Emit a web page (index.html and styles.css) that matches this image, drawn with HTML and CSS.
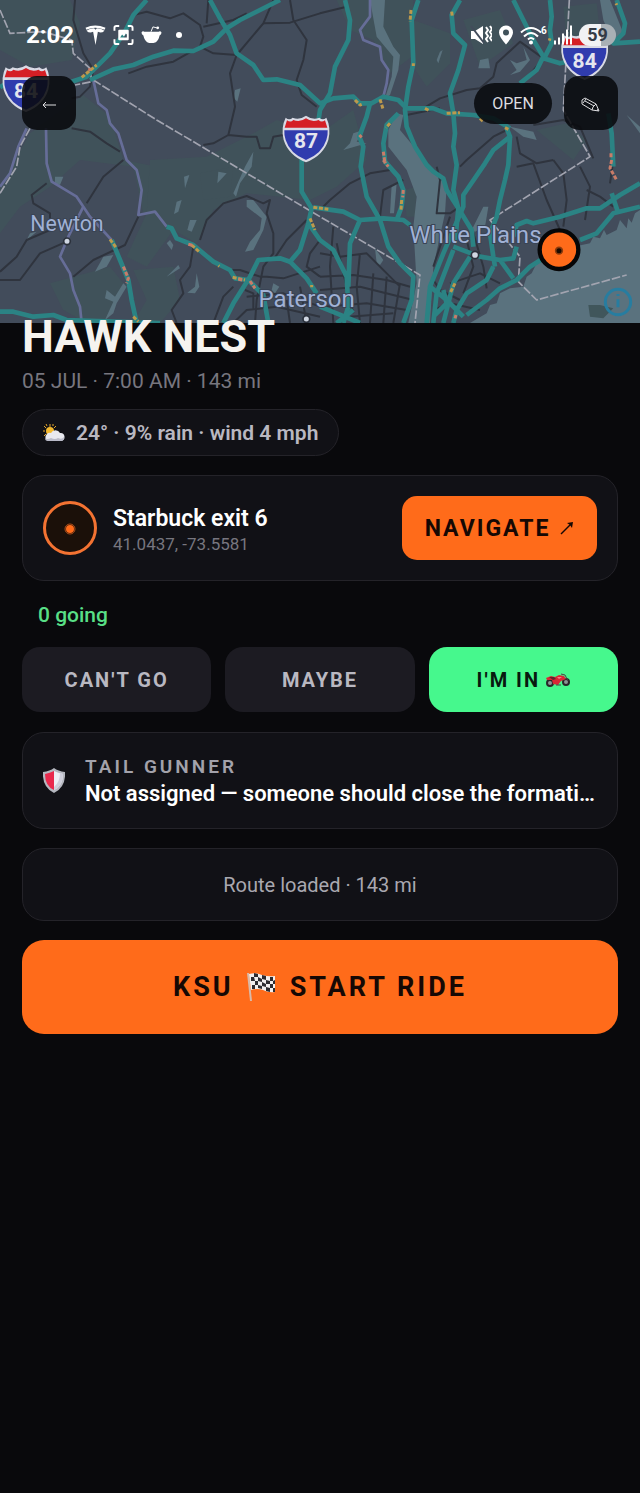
FILE: index.html
```
<!DOCTYPE html>
<html lang="en">
<head>
  <meta charset="UTF-8">
  <meta name="viewport" content="width=device-width, initial-scale=1">
  <title>Hawk Nest</title>
  <link rel="stylesheet" href="styles.css">
</head>
<body>
  <header class="hero">
    <svg class="map" viewBox="0 0 1920 969" preserveAspectRatio="xMidYMid slice">
      <defs>
        <g id="shield">
          <path d="M-61 -62 Q-50 -52 -40 -62 Q-20 -54 0 -68 Q20 -54 40 -62 Q50 -52 61 -62 Q76 -32 67 5 Q52 52 0 72 Q-52 52 -67 5 Q-76 -32 -61 -62Z" fill="#d8d9e4"/>
          <path d="M-57 -54 Q-46 -46 -38 -55 Q-18 -47 0 -60 Q18 -47 38 -55 Q46 -46 57 -54 L64 -32 L-64 -32Z" fill="#d51f25"/>
          <path d="M-65 -24 L65 -24 Q66 -8 61 5 Q48 46 0 65 Q-48 46 -61 5 Q-66 -8 -65 -24Z" fill="#303cae"/>
        </g>
      </defs>
      <rect width="1920" height="969" fill="#424c5b"/>

      <!-- parks -->
      <g class="park">
        <path d="M0 0H210L240 70L215 180L90 200L0 150Z"/>
        <path d="M250 285L330 350L370 480L470 500L530 640L480 680L430 640L400 500L240 480L150 560L60 620L0 700V560L90 400Z"/>
        <path d="M450 480L620 470L760 400L830 360L960 400L1060 330L1100 480L1010 560L930 600L740 580L640 630L590 730L520 690L440 800L380 770L440 640Z"/>
        <path d="M1010 0L1240 0L1235 170L1170 220L1120 120L1050 90Z"/>
        <path d="M1240 60L1350 100L1350 190L1280 260L1240 200Z"/>
        <path d="M1390 60L1500 30L1540 130L1440 200Z"/>
        <path d="M1690 20L1790 10L1800 100L1700 120Z"/>
        <path d="M400 810L520 800L540 900L480 969H400L440 900Z"/>
        <path d="M150 850L330 800L370 850L320 969H260L190 930Z"/>
        <path d="M1610 390L1700 370L1760 420L1720 480Z"/>
        <path d="M1210 570L1250 560L1245 650L1220 650Z"/>
        <path d="M600 520L700 500L690 590L610 600Z"/>
      </g>

      <!-- water -->
      <g class="water">
        <path d="M1110 0H1155L1150 80L1180 140L1200 165L1195 210L1170 285L1155 295L1175 230L1180 170L1130 110Z"/>
        <path d="M1190 340L1210 345L1200 390L1250 450L1290 500L1340 560L1335 640L1300 800L1290 969H1225L1250 850L1240 680L1250 590L1220 510L1165 440L1165 390Z"/>
        <path d="M1920 630L1905 640L1895 668L1885 655L1880 685L1860 660L1850 690L1820 705L1812 690L1800 715L1780 710L1770 730L1700 745L1660 775L1610 790L1595 820L1580 830L1570 860L1530 865L1500 880L1490 910L1470 915L1460 940L1410 969H1920Z"/>
        <path d="M1800 0H1830L1870 100L1840 130L1810 60Z"/>
        <path d="M1175 555L1190 550L1182 640H1170Z"/>
        <path d="M1060 400L1090 390L1070 425L1100 430L1030 450L1050 430Z"/>
        <path d="M1440 180L1465 175L1470 205L1435 205Z"/>
        <path d="M1570 140L1580 180L1550 190L1530 180L1550 210L1530 225L1560 215L1590 180Z"/>
        <path d="M1320 155L1328 150L1315 190L1310 180Z"/>
        <path d="M1530 380L1600 395L1610 420L1570 410Z"/>
        <path d="M1880 345L1920 380V400Z"/>
        <path d="M1450 620L1465 620L1455 680L1425 695L1415 690Z"/>
        <path d="M1125 745L1150 780L1140 795L1130 790Z"/>
        <path d="M700 580L735 500L760 455L755 500L720 550L708 590Z"/>
        <path d="M705 270L722 265L712 305L702 295Z"/>
        <path d="M165 530L190 530L180 555L165 550Z"/>
        <path d="M552 530L568 525L555 565Z"/><path d="M655 515L680 520L652 550Z"/>
        <path d="M530 605L545 600L535 635L522 642Z"/>
        <path d="M570 660L590 660L575 695L562 690Z"/>
        <path d="M510 720L520 735L515 750L500 730Z"/>
        <path d="M310 770L340 765L320 800L285 815Z"/>
        <path d="M590 820L598 860L585 880L562 878L585 860Z"/>
        <path d="M535 795L540 805L500 830Z"/>
        <path d="M320 870L345 890L370 850L380 860L350 910L340 940L315 960L340 905L315 895Z"/>
        <path d="M740 600L760 600L800 650L790 690L760 750L735 755L750 725L780 690L785 655L740 620Z"/>
        <path d="M820 850L838 860L825 880L815 870Z"/><path d="M90 700L110 695L80 720Z"/>
      </g>
      <path d="M1765 915L1800 915L1840 925L1810 955L1770 950Z" fill="#40565b"/>

      <!-- minor roads -->
      <g class="minor">
        <path d="M225 0L220 60L250 160L280 210L270 260L240 290L215 295M215 385L270 395L320 430L360 455"/>
        <path d="M400 45L440 35L510 55L550 40L600 75L610 110L600 140L640 160L710 165L790 70L820 0M610 80L700 60L740 40M620 70L625 0"/>
        <path d="M385 220L440 200L520 185L600 140"/><path d="M710 165L690 220L705 320L685 405L640 430L610 435M685 405L740 410L770 410L780 445L810 445L820 410L850 405"/>
        <path d="M790 70L870 68L960 40L1040 20M870 0L880 60L920 120L910 180L890 240L905 285L950 320"/>
        <path d="M370 480L310 530L260 610M140 550L95 585L100 610L150 640L150 690L80 720L50 770L0 815M200 725L120 760L60 840L0 840"/>
        <path d="M415 650L375 735L280 780L220 830"/><path d="M580 740L570 800L540 840L550 880L515 930L530 969"/>
        <path d="M600 720L620 660L670 610L740 588L790 610L810 600L800 640L820 700L820 760L790 800L770 900L765 969"/>
        <path d="M690 810L720 810L780 830L800 830L850 835L960 800M700 860L670 890L640 969M920 660L860 720L820 780M960 720L930 760L920 800L960 830"/>
        <path d="M740 890L850 880L960 920M700 969L740 930L830 920L960 950M860 900L870 969M900 860L920 969M735 870L760 880L760 930"/>
        <path d="M1270 325L1320 295L1400 270L1440 265L1480 230L1490 190L1560 125L1630 175L1580 235"/>
        <path d="M1220 345L1320 325M1600 375L1690 360L1740 380L1780 475M1550 410L1560 460L1610 490L1660 480"/>
        <path d="M1520 390L1480 410L1400 480L1380 500M960 630L990 600L1050 550L1110 520L1170 510M1150 700L1140 650L1150 570L1210 540"/>
        <path d="M1310 500L1320 540L1310 640L1350 640L1380 620M1350 650L1300 800M1420 700L1450 800L1460 865"/>
        <path d="M1550 500L1600 490L1640 600L1680 690M1660 480L1690 520L1700 600L1690 680M1740 500L1770 560L1755 660M1760 570L1800 590L1840 620M1840 480L1830 550"/>
        <path d="M960 760L1020 770L1100 760L1200 860M1000 680L990 800L1000 969M1080 760L1070 860L1080 969M1120 820L1110 969M1160 830L1150 969M1200 850L1180 969"/>
        <path d="M960 830L1060 825L1160 840L1230 860M960 870L1080 860L1240 900M970 920L1100 910L1220 930M1050 950L1180 940M1010 730L1030 820L1060 940"/>
        <path d="M1300 840L1320 870L1380 900M1350 850L1440 820L1500 850M1400 720L1420 800L1390 880M1300 930L1350 910L1440 930"/>
      </g>

      <!-- county highways -->
      <g class="county">
        <path d="M280 240L295 310L320 330L330 370L355 400L380 480L410 510L425 570L415 645L465 635L500 680"/>
        <path d="M138 385L140 490L155 545L230 590L270 650L335 720"/>
        <path d="M80 385L55 440L30 520L0 560"/>
        <path d="M250 620L205 710L180 770L210 820L220 870L240 920L245 969"/>
        <path d="M1110 0L1110 50L1080 90L1090 120L1140 140L1145 180L1165 210L1160 250L1150 290"/>
      </g>

      <!-- borders -->
      <g class="border">
        <path d="M280 240L470 360L690 490L960 650L1260 825L1245 969"/>
        <path d="M0 30L30 100L130 95L215 120L220 160L270 205L275 245L225 255M90 385L60 440L50 500L0 580"/>
        <path d="M1708 0L1690 330L1770 470L1470 660L1560 770L1555 845L1610 900L1880 825"/>
      </g>

      <!-- highways -->
      <g class="highway">
        <path d="M0 262L20 250M215 245L260 230L330 160L375 95L400 45L440 0"/>
        <path d="M270 240L340 208L400 195L460 170L520 152L580 153L640 125L680 85L720 60L780 30L840 0"/>
        <path d="M630 0L660 55L690 105L710 160L760 195L790 240L830 238L900 255L960 310L1000 295L1060 290L1080 310L1115 310L1150 290L1195 300L1220 325L1300 325L1340 340L1420 345L1480 355L1530 385"/>
        <path d="M1035 0L1050 60L1045 120L1005 200L990 280L960 330L950 400L905 480L905 575L935 625L925 670L900 750L870 785L840 775L775 780L750 830L700 910L670 969"/>
        <path d="M1255 0L1235 60L1240 190L1225 260L1215 330L1220 380L1245 440L1280 495L1300 515L1330 535L1340 570L1375 625L1415 690L1420 740"/>
        <path d="M1380 0L1355 45L1360 100L1395 135L1375 210L1350 280L1360 340L1365 400L1360 440L1370 495L1360 570L1375 625L1365 730"/>
        <path d="M1540 0L1570 60L1600 120L1630 170L1610 210L1560 250M1630 175L1680 190L1730 180"/>
        <path d="M1650 0L1655 50L1650 90L1655 130L1635 170M1850 0L1875 70L1870 100L1840 130L1920 125"/>
        <path d="M1520 385L1530 410L1480 450L1455 490L1390 585L1390 620L1360 690L1330 760L1290 860L1280 969"/>
        <path d="M1530 410L1525 495L1515 540L1500 600L1490 650L1470 700L1480 770L1485 800"/>
        <path d="M1110 310L1100 350L1078 410L1090 440L1082 500L1100 590L1140 660L1165 740L1200 790L1240 830L1235 900L1210 969"/>
        <path d="M1195 340L1160 375L1150 430L1155 485L1195 530L1210 570L1205 620L1190 660"/>
        <path d="M870 785L920 835L950 880M500 680L515 685L530 715L580 735L640 785L690 810L705 835L745 840L790 885L805 969"/>
        <path d="M335 720L360 780L385 840L395 900L410 969M0 935L40 935L100 950L160 945L200 960L480 969"/>
        <path d="M940 622L1030 635L1080 660L1150 655L1210 660L1230 675M925 670L960 720L1000 750L1040 830L1045 920L1030 969M1080 660L1050 730L1045 860"/>
        <path d="M1540 710L1550 675L1580 663L1600 670L1680 650L1760 625L1800 625L1860 585L1920 550"/>
        <path d="M1740 720L1790 700L1840 640L1920 620M1835 580L1855 640M1825 340L1835 400L1840 500"/>
        <path d="M1630 775L1590 800L1550 840L1500 865L1460 900L1400 945M1360 740L1440 770L1500 780L1540 835M1500 780L1540 775L1550 740"/>
        <path d="M1480 800L1460 840L1400 880L1370 930L1360 969M1410 770L1360 850L1340 930L1330 969M1360 750L1310 880L1300 969M1290 860L1340 900L1390 950M1300 950L1340 910L1330 870"/>
        <path d="M960 920L1010 940L1080 969M1010 969L1060 930"/>
      </g>

      <!-- traffic -->
      <g class="traffic">
        <path d="M245 232L290 195M330 718L350 745M575 735L597 755M698 832L735 840M1065 300L1080 315L1085 313M1140 298L1150 330M1275 325L1290 333M1340 340L1380 338M1440 355L1450 365M1355 35L1357 50M1233 30L1230 65M940 622L985 628M930 655L945 690M1205 600L1203 630M1365 850L1350 880M1848 10L1850 15M400 950L415 965M1240 190V198M1650 115L1648 122M935 855V862M655 797L658 799M1170 370L1158 383M1515 383L1525 388"/>
        <path class="slow" d="M370 800L385 835L380 850M565 733L582 737M715 838L728 840M750 843L765 865M265 210L272 208M1150 455L1155 490M1150 480L1165 500M1835 480L1830 505L1850 540M1365 955L1368 945M1833 460V475M1078 405L1085 412M1210 570L1208 592"/>
      </g>

      <use href="#shield" transform="translate(78 264)"/>
      <use href="#shield" transform="translate(918 415)"/>
      <use href="#shield" transform="translate(1754 168)"/>
      <g class="shield-text">
        <text x="78" y="293">84</text>
        <text x="918" y="444">87</text>
        <text x="1754" y="205">84</text>
      </g>
      <g class="town">
        <text class="small-town" x="201" y="694">Newton</text>
        <text x="920" y="921">Paterson</text>
        <text x="1426" y="729">White Plains</text>
      </g>
      <g fill="#cfd6e2" stroke="#2b313c" stroke-width="5">
        <circle cx="201" cy="724" r="10"/>
        <circle cx="919" cy="957" r="10"/>
        <circle cx="1425" cy="765" r="11"/>
      </g>
      <g fill="none" stroke="#277da0" stroke-width="9">
        <circle cx="1854" cy="906" r="38"/>
        <path d="M1854 898V922M1854 882V888"/>
      </g>
      <circle cx="1677" cy="749" r="58" fill="#ff6b1a" stroke="#060607" stroke-width="13"/>
      <circle cx="1677" cy="752" r="10" fill="#1a0b02" stroke="#8b3b0d" stroke-width="5"/>
    </svg>

    <div class="overlay">
      <div class="status">
        <div class="status-left">
          <span class="clock">2:02</span>
          <svg class="i-tesla" viewBox="0 0 21 21"><path d="M0 3Q10 -2 21 3L20 5Q10 1 1 5Z"/><path d="M1 6Q5 3.500 9 3.500L10.500 5L12 3.500Q16 3.500 20 6Q18 8 15.500 8L13 7L10.500 21L8 7L5.500 8Q3 8 1 6Z"/></svg>
          <svg class="i-shot" viewBox="0 0 21 21"><path d="M1 6V3Q1 1 3 1H6M15 1H18Q20 1 20 3V6M20 15V18Q20 20 18 20H15M6 20H3Q1 20 1 18V15" fill="none" stroke="#fff" stroke-width="2"/><path fill-rule="evenodd" d="M6 5H15Q16 5 16 6V15Q16 16 15 16H6Q5 16 5 15V6Q5 5 6 5ZM7 13L9 10L11 12L13 9L14 10V13Z"/></svg>
          <svg class="i-reddit" viewBox="0 0 21 21"><path d="M0 8Q1 6 3 7H18Q20 6 21 8Q21 10 19 11Q18 16 15 18Q10 20 6 18Q3 16 2 11Q0 10 0 8Z"/><path d="M10 7L12 2L16 3" fill="none" stroke="#fff"/><circle cx="17" cy="3" r="1.500"/></svg>
          <span class="more"></span>
        </div>
        <div class="status-right">
          <svg class="i-mute" viewBox="0 0 22 20"><path d="M1 6H5L13 1V19L5 14H1Z"/><path d="M1 1L14 18" stroke="#424c5b" stroke-width="2"/><path d="M16 2L18 5L16 8L18 11L16 14L18 17M20 1L22 4L20 7L22 10L20 13L22 16" fill="none" stroke="#fff" stroke-width="2"/></svg>
          <svg class="i-pin" viewBox="0 0 16 19"><path fill-rule="evenodd" d="M8 0A7 7 0 0 1 15 7Q15 11 8 19Q1 11 1 7A7 7 0 0 1 8 0ZM8 4A3 3 0 0 0 8 10A3 3 0 0 0 8 4Z"/></svg>
          <svg class="i-wifi" viewBox="0 0 28 19"><path d="M1 7Q11 -2 21 7M4 11Q11 4 18 11M8 14Q11 11 14 14" fill="none" stroke="#fff" stroke-width="2"/><circle cx="11" cy="17" r="2"/><text x="21" y="8" font-size="10">6</text></svg>
          <svg class="i-signal" viewBox="0 0 19 19"><path d="M0 15H2V19H0ZM4 12H6V19H4ZM8 8H10V19H8ZM12 4H14V19H12ZM16 0H18V19H16Z"/></svg>
          <span class="battery">59</span>
        </div>
      </div>
      <nav class="toolbar">
        <button class="square" aria-label="Back">
          <svg width="14" height="10" viewBox="0 0 14 10"><path d="M14 5H1M4 2L1 5L4 8" fill="none" stroke="currentColor"/></svg>
        </button>
        <button class="open">OPEN</button>
        <button class="square" aria-label="Edit">
          <svg width="20" height="16" viewBox="0 0 20 16"><path d="M1 3L4 1L15 7L18 14L11 13L1 7ZM11 13L12 10L15 7M2 6L5 2M4 4L13 9M16 14L17 12" fill="none" stroke="currentColor"/></svg>
        </button>
      </nav>
    </div>
  </header>

  <main class="content">
    <h1>HAWK NEST</h1>
    <p class="date">05 JUL · 7:00 AM · 143 mi</p>

    <div class="weather">
      <svg width="22" height="18" viewBox="0 0 22 18">
        <path d="M7 0V3M1 2L3 4M0 7H2M13 2L11 4M1 12L3 10M3 0L4 2M10 0V2" stroke="#e3a62b" stroke-width="1"/>
        <circle cx="7" cy="7" r="4" fill="#f4b92f"/>
        <path d="M5 17A4 4 0 0 1 4 10A4 4 0 0 1 8 9A5 5 0 0 1 17 9A4 4 0 0 1 18 17Z" fill="#e9e9ef"/>
        <path d="M2 14Q4 16 8 14Q12 16 15 14Q19 16 21 13Q21 17 18 17H5Q2 17 2 14Z" fill="#b9bac8"/>
      </svg>
      <span>24° · 9% rain · wind 4 mph</span>
    </div>

    <section class="card meetup">
      <svg width="54" height="54" viewBox="0 0 54 54">
        <circle cx="27" cy="27" r="25.500" fill="#1b1009" stroke="#f47332" stroke-width="3"/>
        <circle cx="27" cy="28" r="4" fill="#ff6b1a"/>
        <circle cx="27" cy="28" r="5" fill="none" stroke="#b24f19"/>
      </svg>
      <div class="place">
        <h2>Starbuck exit 6</h2>
        <p>41.0437, -73.5581</p>
      </div>
      <button class="navigate">NAVIGATE
        <svg width="14" height="14" viewBox="0 0 14 14"><path d="M1 13L11 3" stroke="currentColor" stroke-width="1.500"/><path d="M7 2L13 1L12 7L10 4Z" fill="currentColor"/></svg>
      </button>
    </section>

    <p class="going">0 going</p>

    <div class="rsvp">
      <button>CAN'T GO</button>
      <button>MAYBE</button>
      <button class="in">I'M IN
        <svg width="24" height="14" viewBox="0 0 24 14">
          <g fill="#8d9494" stroke="#292629" stroke-width="2"><circle cx="4" cy="10" r="3"/><circle cx="20" cy="9" r="3"/></g>
          <path d="M0 5L5 3L9 4L13 2L18 3L20 6L15 8L12 12L7 11L6 7L1 7Z" fill="#d92735"/>
          <path d="M3 4L8 4L10 6L7 7Z" fill="#63222a"/>
          <path d="M15 1L19 2L22 8M10 12H15" fill="none" stroke="#4c4145"/>
          <path d="M11 4L16 4L13 6Z" fill="#ff7784"/>
        </svg>
      </button>
    </div>

    <section class="card gunner">
      <svg width="22" height="25" viewBox="0 0 22 25">
        <path d="M11 0Q15 3 22 4Q23 19 11 25Q-1 19 0 4Q7 3 11 0Z" fill="#b5b7bf"/>
        <path d="M11 3Q7 5 2 6Q2 18 11 22Z" fill="#e9294c"/>
        <path d="M11 3Q15 5 20 6Q20 18 11 22Z" fill="#eeeef4"/>
        <path d="M20 6Q20 18 11 22V19Q17 14 17 5Z" fill="#cfcfdb"/>
      </svg>
      <div class="gunner-text">
        <h3>TAIL GUNNER</h3>
        <p>Not assigned — someone should close the formati…</p>
      </div>
    </section>

    <div class="card route">Route loaded · 143 mi</div>

    <button class="start">
      <span>KSU</span>
      <svg width="30" height="30" viewBox="0 0 30 30">
        <path d="M1 1L4 29" stroke="#d9b9a8" stroke-width="2"/>
        <path d="M2 2Q9 0 15 3Q22 5 28 4L28 20Q22 21 16 18Q10 16 4 18Z" fill="#f1eeee"/>
        <path d="M7 1L11 2V5L7 5ZM15 3L19 4V8L15 7ZM23 5L26 5V9L23 9ZM4 5L7 5L8 9L4 9ZM11 5L15 7V10L11 9ZM19 8L23 9V12L19 12ZM26 9L28 8V12L26 12ZM8 9L11 9V13L8 13ZM15 10L19 12V15L15 14ZM23 12L26 12V16L23 16ZM5 13L8 13V17L5 17ZM11 13L15 14V17L11 16ZM19 15L23 16V20L19 19ZM26 16L28 16V20L26 20Z" fill="#2d2b30"/>
      </svg>
      <span>START RIDE</span>
    </button>
  </main>
</body>
</html>
```
FILE: styles.css
```
* {
  box-sizing: border-box;
}

body {
  margin: 0;
  min-height: 100vh;
  font-family: Roboto, sans-serif;
  background: #09090c;
  color: #f5f3ef;
}

h1, h2, h3, p {
  margin: 0;
}

button {
  font-family: inherit;
  border: none;
  padding: 0;
  cursor: pointer;
}

svg {
  display: block;
  flex-shrink: 0;
}

/* map header */
.hero {
  display: grid;
  height: 323px;
  overflow: hidden;
}

.map, .overlay {
  grid-area: 1 / 1;
  width: 100%;
}

.map {
  height: 323px;
}

.park {
  fill: #40545a;
  opacity: 0.8;
}

.water {
  fill: #5a727e;
}

.minor, .county, .border, .highway, .traffic {
  fill: none;
  stroke-linejoin: round;
}

.minor {
  stroke: #2f343e;
  stroke-width: 6;
}

.county {
  stroke: #666d98;
  stroke-width: 8;
}

.border {
  stroke: #a2a4b0;
  stroke-width: 5;
  stroke-dasharray: 26 6;
}

.highway {
  stroke: #2b8384;
  stroke-width: 14;
}

.traffic {
  stroke: #bd994c;
  stroke-width: 9;
  stroke-dasharray: 12 5;
}

.traffic .slow {
  stroke: #c97c68;
}

.shield-text {
  fill: #e4e5ee;
  font-size: 63px;
  font-weight: 700;
  text-anchor: middle;
}

.town {
  fill: #a0b1d5;
  stroke: #394354;
  stroke-width: 6;
  paint-order: stroke;
  font-size: 72px;
  text-anchor: middle;
}

.small-town {
  font-size: 64px;
}

.overlay {
  padding: 22px 22px 0;
}

.status {
  display: flex;
  align-items: center;
  justify-content: space-between;
  height: 26px;
  padding: 0 2px 0 4px;
}

.status-left, .status-right {
  display: flex;
  align-items: center;
}

.status-left {
  gap: 7px;
}

.status-right {
  gap: 6px;
}

.status svg {
  fill: #fff;
  height: 20px;
}

.clock {
  margin-right: 4px;
  color: #fff;
  font-size: 24px;
  font-weight: 700;
}

.i-tesla, .i-shot, .i-reddit {
  width: 21px;
}

.i-mute {
  width: 22px;
}

.i-pin {
  width: 16px;
}

.i-wifi {
  width: 28px;
  font-weight: 700;
}

.i-signal {
  width: 19px;
}

.more {
  width: 6px;
  height: 6px;
  margin-left: 7px;
  border-radius: 50%;
  background: #fff;
}

.battery {
  width: 37px;
  border-radius: 11px;
  background: linear-gradient(90deg, #f1f2f4 60%, #a9b0b5 60%);
  color: #333a45;
  font-size: 18px;
  font-weight: 700;
  line-height: 22px;
  text-align: center;
}

.toolbar {
  display: flex;
  align-items: center;
  gap: 12px;
  margin-top: 28px;
}

.square, .open {
  background: rgba(8, 9, 13, 0.87);
  color: #dddde0;
}

.square {
  display: grid;
  place-items: center;
  width: 54px;
  height: 54px;
  padding-top: 4px;
  border-radius: 15px;
}

.open {
  width: 78px;
  height: 41px;
  margin-left: auto;
  border-radius: 21px;
  font-size: 16px;
}

/* ride details */
.content {
  display: flex;
  flex-direction: column;
  margin-top: -7px;
  padding: 0 22px 24px;
}

h1 {
  position: relative;
  font-size: 45px;
  font-weight: 700;
  line-height: 42px;
}

.date {
  margin-top: 11px;
  color: #77767f;
  font-size: 21px;
  line-height: 24px;
}

.weather {
  display: flex;
  align-items: center;
  align-self: flex-start;
  gap: 11px;
  height: 47px;
  margin-top: 16px;
  padding: 0 20px;
  border: 1px solid #242329;
  border-radius: 24px;
  background: #111116;
  color: #b9b8c1;
  font-size: 21px;
  font-weight: 600;
}

.card {
  display: flex;
  align-items: center;
  margin-top: 19px;
  border: 1px solid #242329;
  border-radius: 22px;
  background: #111116;
}

.meetup {
  gap: 16px;
  padding: 20px;
}

.place {
  flex: 1;
  padding-top: 4px;
}

.place h2 {
  color: #fff;
  font-size: 23px;
  font-weight: 600;
  line-height: 28px;
}

.place p {
  color: #77767f;
  font-size: 17px;
  line-height: 22px;
}

.navigate {
  display: flex;
  align-items: center;
  justify-content: center;
  gap: 10px;
  width: 195px;
  height: 64px;
  border-radius: 15px;
  background: #ff6b1a;
  color: #160804;
  font-size: 23px;
  font-weight: 700;
  letter-spacing: 2px;
}

.going {
  margin: 22px 16px 0;
  color: #58df86;
  font-size: 21px;
  font-weight: 500;
  line-height: 24px;
}

.rsvp {
  display: grid;
  grid-template-columns: repeat(3, 1fr);
  gap: 14px;
  margin: 20px 0 1px;
}

.rsvp button {
  display: flex;
  align-items: center;
  justify-content: center;
  gap: 6px;
  height: 65px;
  border-radius: 18px;
  background: #1c1b22;
  color: #b9b8c1;
  font-size: 20px;
  font-weight: 700;
  letter-spacing: 2px;
}

.rsvp .in {
  background: #46f88d;
  color: #08190f;
}

.gunner {
  gap: 20px;
  padding: 20px;
}

.gunner-text {
  flex: 1;
  min-width: 0;
}

.gunner h3 {
  color: #a3a2ab;
  font-size: 19px;
  font-weight: 600;
  line-height: 27px;
  letter-spacing: 3px;
}

.gunner p {
  overflow: hidden;
  color: #fff;
  font-size: 22px;
  font-weight: 600;
  line-height: 28px;
  text-overflow: ellipsis;
  white-space: nowrap;
}

.route {
  justify-content: center;
  height: 73px;
  color: #a9a8b0;
  font-size: 20px;
}

.start {
  display: flex;
  align-items: center;
  justify-content: center;
  gap: 13px;
  height: 94px;
  margin-top: 19px;
  border-radius: 22px;
  background: #ff6b1a;
  color: #160804;
  font-size: 27px;
  font-weight: 700;
  letter-spacing: 3px;
}
```
